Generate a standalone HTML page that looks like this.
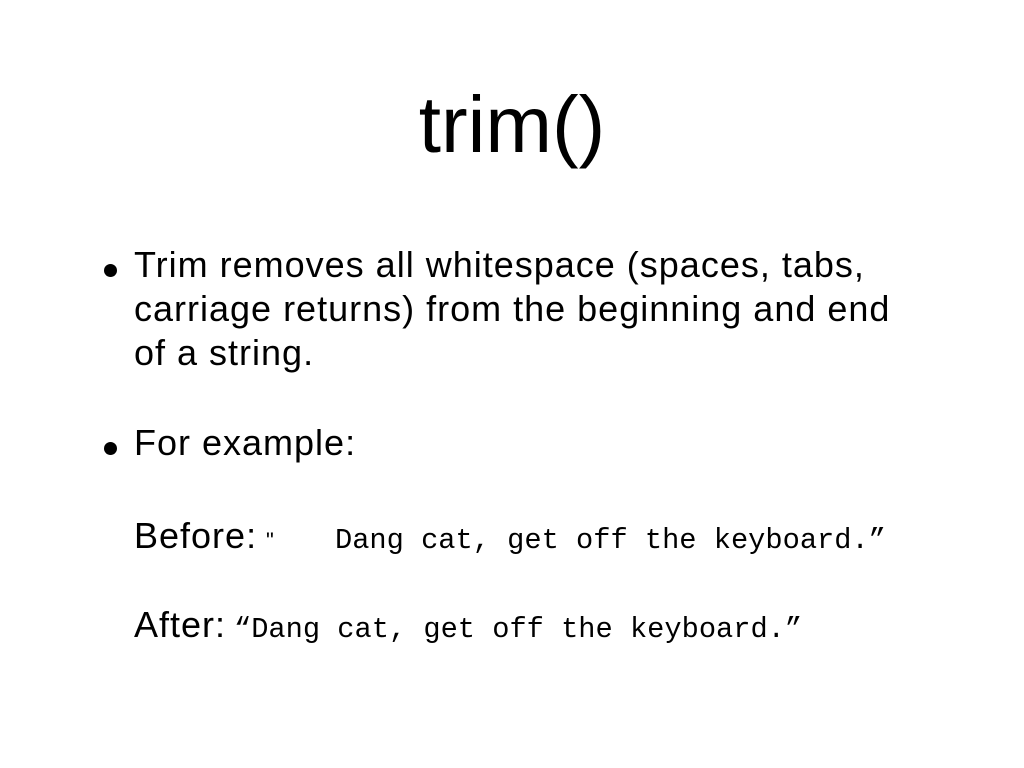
<!DOCTYPE html>
<html><head><meta charset="utf-8"><style>
body{margin:0;width:1024px;height:768px;background:#fff;color:#000;font-family:"Liberation Sans",sans-serif;position:relative;overflow:hidden}
.a{position:absolute;white-space:pre;line-height:1}
.t{font-size:80px;left:0;width:1024px;text-align:center;top:85px}
.b{font-size:36px;letter-spacing:1px}
.d{position:absolute;width:13px;height:13px;border-radius:50%;background:#000;left:104px}
.m{font-family:"Liberation Mono",monospace;font-size:28.7px}
</style></head><body>
<div class="a t">trim()</div>
<div class="d" style="top:264px"></div>
<div class="a b" style="left:134px;top:247px">Trim removes all whitespace (spaces, tabs,</div>
<div class="a b" style="left:134px;top:291px">carriage returns) from the beginning and end</div>
<div class="a b" style="left:134px;top:335px">of a string.</div>
<div class="d" style="top:442px"></div>
<div class="a b" style="left:134px;top:425px">For example:</div>
<div class="a b" style="left:134px;top:518px">Before:</div>
<div class="a" style="left:266px;top:530px;font-size:22px">"</div>
<div class="a m" style="left:335px;top:527px">Dang cat, get off the keyboard.”</div>
<div class="a b" style="left:134px;top:607px">After:</div>
<div class="a m" style="left:234px;top:616px">“Dang cat, get off the keyboard.”</div>
</body></html>
